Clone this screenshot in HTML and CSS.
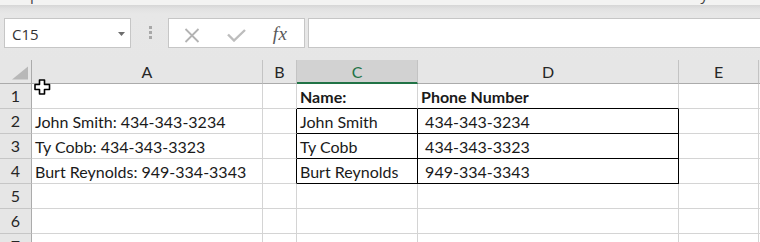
FILE: index.html
```html
<!DOCTYPE html>
<html>
<head>
<meta charset="utf-8">
<link rel="stylesheet" href="styles.css">
</head>
<body>
<div class="topstrip"><span>p</span><span>y</span></div>
<div class="fbar">
  <div class="namebox">
    <span class="nb-text">C15</span>
    <svg class="nb-arrow" width="7" height="4" viewBox="0 0 7 4"><polygon points="0,0 7,0 3.5,4" fill="#6d6d6d"/></svg>
  </div>
  <div class="sep"><i></i><i></i><i></i></div>
  <div class="btns">
    <div class="btn">
      <svg width="16" height="15" viewBox="0 0 16 15"><path d="M1.5 1 L14.5 14 M14.5 1 L1.5 14" stroke="#b3b3b3" stroke-width="1.8" fill="none"/></svg>
    </div>
    <div class="btn">
      <svg width="19" height="13" viewBox="0 0 19 13"><path d="M1 5.5 L7 11.5 L18 1" stroke="#bdbdbd" stroke-width="2.4" fill="none"/></svg>
    </div>
    <div class="btn fx">fx</div>
  </div>
  <div class="finput"></div>
</div>
<div class="sheet">
  <div class="corner"><svg width="17" height="14" viewBox="0 0 17 14"><polygon points="0,13.5 16,13.5 16,0.5" fill="#b8b8b8"/></svg></div>
  <div class="ch">A</div><div class="ch">B</div><div class="ch sel">C</div><div class="ch">D</div><div class="ch">E</div><div class="ch last"></div>

  <div class="rh">1</div><div class="c"></div><div class="c"></div><div class="c b bb">Name:</div><div class="c b bb">Phone Number</div><div class="c"></div><div class="c last"></div>
  <div class="rh">2</div><div class="c">John Smith: 434-343-3234</div><div class="c br"></div><div class="c br bb">John Smith</div><div class="c br bb"> 434-343-3234</div><div class="c"></div><div class="c last"></div>
  <div class="rh">3</div><div class="c">Ty Cobb: 434-343-3323</div><div class="c br"></div><div class="c br bb">Ty Cobb</div><div class="c br bb"> 434-343-3323</div><div class="c"></div><div class="c last"></div>
  <div class="rh">4</div><div class="c">Burt Reynolds: 949-334-3343</div><div class="c br"></div><div class="c br bb">Burt Reynolds</div><div class="c br bb"> 949-334-3343</div><div class="c"></div><div class="c last"></div>
  <div class="rh">5</div><div class="c"></div><div class="c"></div><div class="c"></div><div class="c"></div><div class="c"></div><div class="c last"></div>
  <div class="rh">6</div><div class="c"></div><div class="c"></div><div class="c"></div><div class="c"></div><div class="c"></div><div class="c last"></div>
  <div class="rh">7</div><div class="c"></div><div class="c"></div><div class="c"></div><div class="c"></div><div class="c"></div><div class="c last"></div>

  <svg class="cursor" width="17" height="16" viewBox="0 0 17 16"><path d="M5.5 1 H10.5 V5.5 H15.5 V10.5 H10.5 V15 H5.5 V10.5 H1 V5.5 H5.5 Z" fill="#fff" stroke="#000" stroke-width="1.6" stroke-linejoin="round"/></svg>
</div>
</body>
</html>
```
FILE: styles.css
```css
* { box-sizing: border-box; }
html, body { margin: 0; padding: 0; }
body {
  width: 760px;
  height: 242px;
  overflow: hidden;
  background: #e6e6e6;
  font-family: Lato, "Open Sans", sans-serif;
  color: #222;
}
.topstrip {
  height: 5px;
  overflow: hidden;
  background: #f3f3f2;
  display: flex;
  justify-content: space-between;
  padding: 0 52px 0 30px;
  font-family: "Open Sans", sans-serif;
  font-size: 15px;
  line-height: 15px;
  color: #444;
}
.topstrip span { margin-top: -13px; display: block; }
.fbar {
  height: 55px;
  display: flex;
  align-items: flex-start;
  padding: 13px 0 0 4px;
  background: linear-gradient(#d6d6d6 0px, #e2e2e2 4px, #e7e7e7 9px, #e6e6e6 100%);
}
.namebox {
  width: 127px;
  height: 30px;
  background: #fff;
  border: 1px solid #c6c6c6;
  display: flex;
  align-items: center;
  padding: 0 5px 0 7px;
  font-family: "Open Sans", sans-serif;
  font-size: 15px;
  color: #333;
}
.nb-text { flex: 1; line-height: 20px; padding-top: 1px; }
.nb-arrow { display: block; margin-top: 1px; }
.sep {
  width: 37px;
  height: 30px;
  display: flex;
  flex-direction: column;
  align-items: center;
  padding-top: 8px;
  gap: 2px;
  padding-left: 1px;
}
.sep i {
  display: block;
  width: 3px;
  height: 3px;
  background: #a8a8a8;
}
.btns {
  width: 137px;
  height: 30px;
  background: #fff;
  border: 1px solid #c6c6c6;
  display: flex;
}
.btn {
  width: 45px;
  height: 28px;
  display: flex;
  align-items: center;
  justify-content: center;
}
.btn svg { display: block; }
.btn:first-child svg { margin-top: 5px; }
.btn:nth-child(2) svg { margin-top: 5px; }
.fx {
  font-family: "Liberation Serif", serif;
  font-style: italic;
  font-size: 19px;
  color: #595959;
  line-height: 20px;
  padding-top: 2px;
  padding-right: 3px;
  letter-spacing: 0.5px;
}
.finput {
  flex: 1;
  height: 30px;
  margin-left: 3px;
  background: #fff;
  border: 1px solid #c6c6c6;
  border-right: none;
}
.sheet {
  position: relative;
  display: grid;
  grid-template-columns: 32px 231px 34px 121px 261px 80px 1fr;
  grid-template-rows: 24px repeat(7, 25px);
  background: #fff;
  font-size: 16px;
}
.corner {
  background: #e6e6e6;
  border-right: 1px solid #ababab;
  border-bottom: 1px solid #ababab;
  padding: 6px 0 0 12px;
}
.corner svg { display: block; }
.ch {
  background: #e6e6e6;
  border-right: 1px solid #c3c3c3;
  border-bottom: 1px solid #ababab;
  display: flex;
  align-items: center;
  justify-content: center;
  line-height: 20px;
  color: #262626;
  padding-top: 1px;
}
.ch.sel {
  background: #d2d2d2;
  color: #217346;
  border-bottom: 2px solid #217346;
  padding-top: 2px;
}
.ch.last, .c.last { border-right: none; }
.rh {
  background: #e6e6e6;
  border-right: 1px solid #ababab;
  border-bottom: 1px solid #c6c6c6;
  display: flex;
  align-items: center;
  justify-content: center;
  line-height: 20px;
  color: #262626;
}
.c {
  border-right: 1px solid #d4d4d4;
  border-bottom: 1px solid #d4d4d4;
  display: flex;
  align-items: flex-end;
  padding-left: 3px;
  padding-bottom: 1px;
  line-height: 20px;
  white-space: pre;
  overflow: visible;
  color: #1a1a1a;
}
.c.b { font-weight: bold; }
.c.br { border-right-color: #000; }
.c.bb { border-bottom-color: #000; }
.cursor {
  position: absolute;
  left: 34px;
  top: 19px;
}
```
